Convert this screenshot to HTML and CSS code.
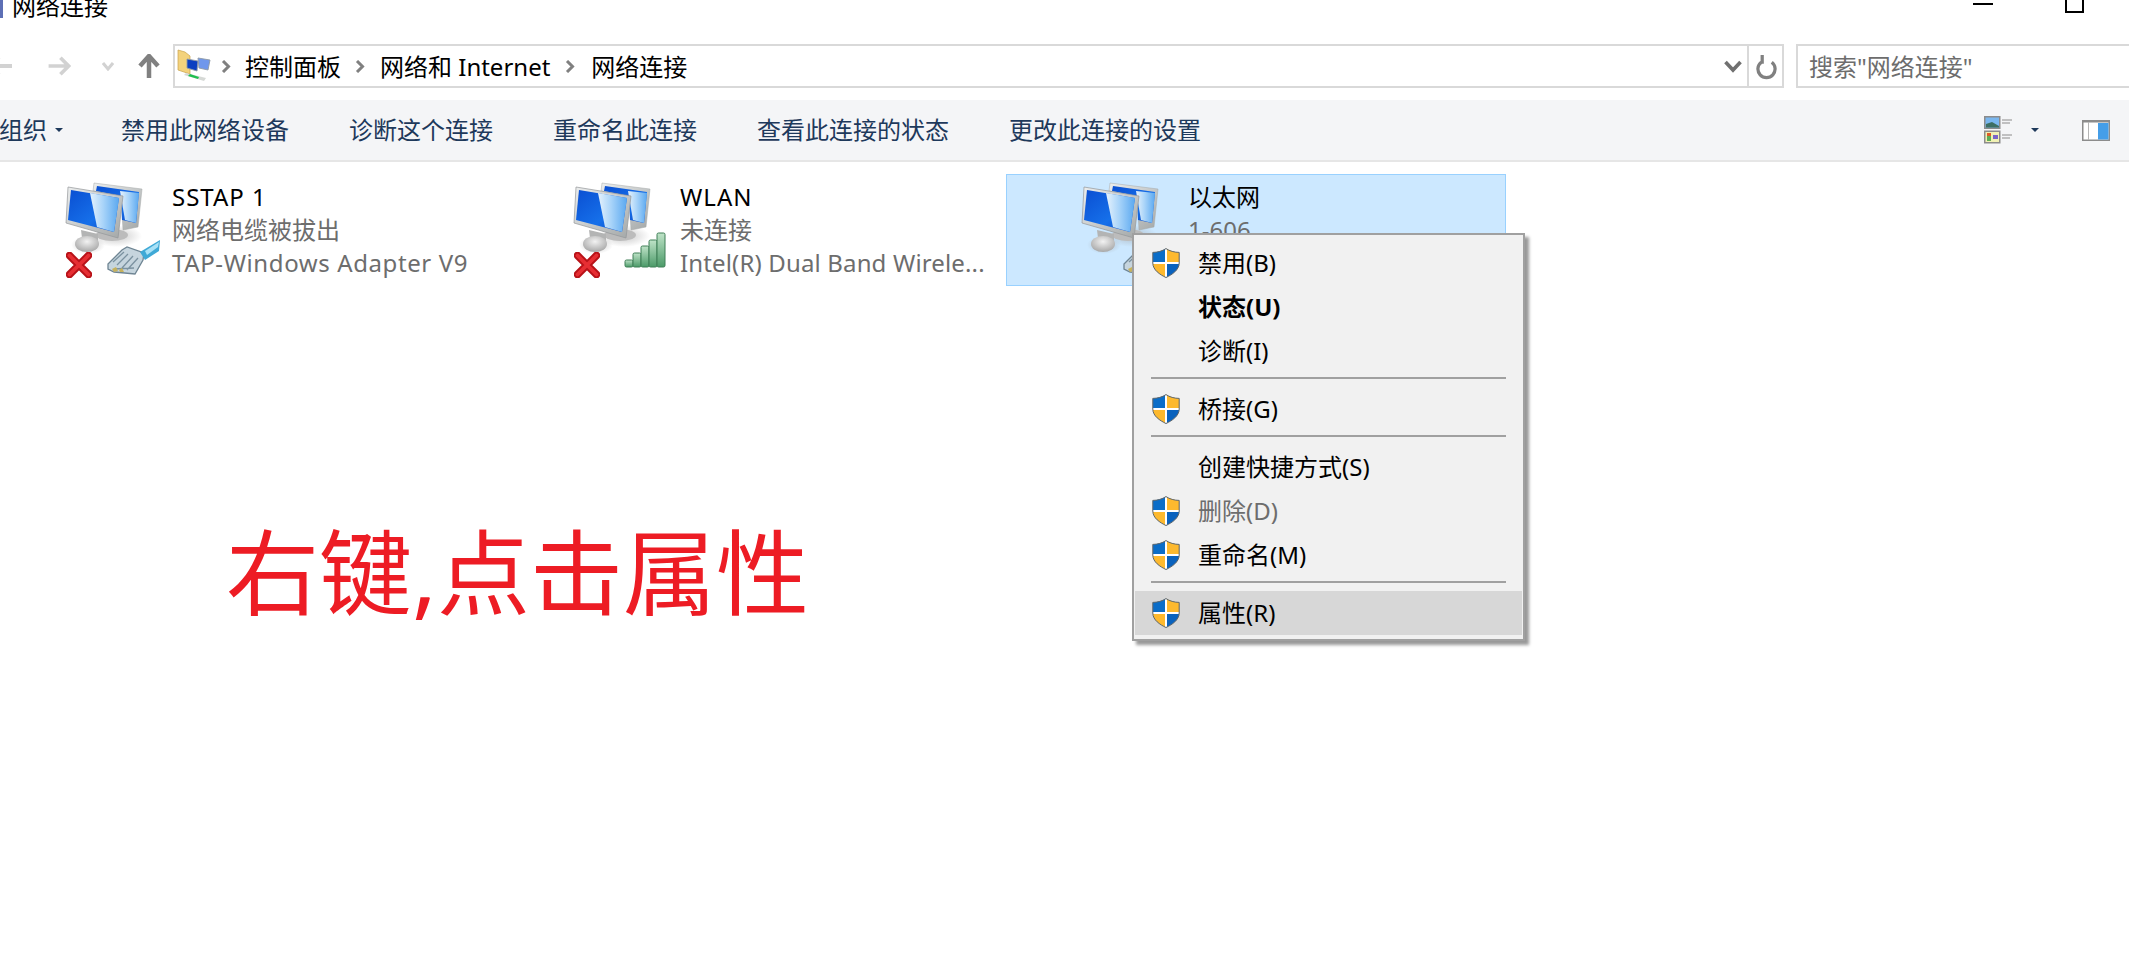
FILE: index.html
```html
<!DOCTYPE html>
<html lang="zh-CN">
<head>
<meta charset="utf-8">
<title>网络连接</title>
<link rel="stylesheet" href="styles.css">
</head>
<body>
<svg class="defs" width="0" height="0" aria-hidden="true">
  <defs>
    <linearGradient id="scr" x1="0" y1="0" x2="1" y2="1">
      <stop offset="0" stop-color="#0a4fd2"/><stop offset=".6" stop-color="#1670ea"/><stop offset="1" stop-color="#0a45c2"/>
    </linearGradient>
    <linearGradient id="glare" x1="0" y1="0" x2="1" y2="0">
      <stop offset="0" stop-color="#e6f2fc"/><stop offset=".45" stop-color="#a9d4f9"/><stop offset="1" stop-color="#5aa8f0"/>
    </linearGradient>
    <linearGradient id="frame" x1="0" y1="0" x2="1" y2="1">
      <stop offset="0" stop-color="#eceeee"/><stop offset="1" stop-color="#a3a7a7"/>
    </linearGradient>
    <radialGradient id="base" cx=".5" cy=".35" r=".7">
      <stop offset="0" stop-color="#f2f2f2"/><stop offset="1" stop-color="#a2a2a2"/>
    </radialGradient>
    <radialGradient id="soft" cx=".5" cy=".5" r=".5">
      <stop offset="0" stop-color="#9a9a9a" stop-opacity=".55"/><stop offset="1" stop-color="#9a9a9a" stop-opacity="0"/>
    </radialGradient>
    <linearGradient id="bar" x1="0" y1="0" x2="0" y2="1">
      <stop offset="0" stop-color="#bfe3c8"/><stop offset="1" stop-color="#4b9a68"/>
    </linearGradient>
    <symbol id="computers" viewBox="0 4 122 112">
      <ellipse cx="66" cy="66" rx="26" ry="11" fill="url(#soft)"/>
      <ellipse cx="62" cy="65" rx="16" ry="6" fill="#bcbcbc"/>
      <path d="M44 13 92 19 88 57 73 60 71 26 43 21Z" fill="url(#frame)" stroke="#a5a9a9" stroke-width=".5"/>
      <path d="M47 16 89 22 86 53 72 50 71 26 46 21Z" fill="url(#scr)"/>
      <path d="M70 21 89 23 86 53 75 50Z" fill="url(#glare)"/>
      <ellipse cx="38" cy="75" rx="17" ry="9" fill="url(#soft)"/>
      <path d="M18 17 73 26 68 68 16 53Z" fill="url(#frame)" stroke="#93979a" stroke-width=".7"/>
      <path d="M31 60 48 64 48 71 32 68Z" fill="#b3b4b4"/>
      <ellipse cx="37" cy="74" rx="12" ry="8" fill="url(#base)"/>
      <path d="M21 20 69 28 64 62 18 50Z" fill="url(#scr)"/>
      <path d="M40 23 69 28 64 62 47 57Z" fill="url(#glare)"/>
    </symbol>
    <symbol id="cross" viewBox="0 0 26 26">
      <path d="M3.500 3.500 22.500 22.500M22.500 3.500 3.500 22.500" stroke="#b81218" stroke-width="7.500" stroke-linecap="round"/>
      <path d="M3.500 3.500 22.500 22.500M22.500 3.500 3.500 22.500" stroke="#e62e33" stroke-width="3.800" stroke-linecap="round"/>
    </symbol>
    <symbol id="plug" viewBox="0 0 54 40">
      <path d="M1 26 15 12 20 9 37 15 36 22 28 36 7 34 1 31Z" fill="#c6d5de" stroke="#6f8593" stroke-width="1.300"/>
      <path d="M6 24 17 14M10 27 21 16M15 30 26 18M20 32 31 20M7 31 27 30" stroke="#7b92a0" stroke-width="1.300"/>
      <path d="M5 31 9 29 11 33 7 34ZM12 32 15 30 17 34 13 34Z" fill="#c6b25e"/>
      <path d="M33 14 53 2 52 13 38 22Z" fill="#3fa9d6"/>
      <path d="M38 13 52 4 51 9 40 17Z" fill="#a9e1f6"/>
    </symbol>
    <symbol id="shield" viewBox="0 0 28 30">
      <clipPath id="shieldclip"><path d="M14 .6C10.500 3 5.500 4.400 .8 4.400V15C.8 22 8 26.700 14 29.500 20 26.700 27.200 22 27.200 15V4.400C22.500 4.400 17.500 3 14 .6Z"/></clipPath>
      <g clip-path="url(#shieldclip)">
        <rect width="14" height="15" fill="#0a6dc8"/>
        <rect x="14" width="14" height="15" fill="#fdb92e"/>
        <rect y="15" width="14" height="15" fill="#fdb92e"/>
        <rect x="14" y="15" width="14" height="15" fill="#0a62bd"/>
        <rect x="13" width="2" height="30" fill="#fff"/>
        <rect y="14" width="28" height="2" fill="#fff"/>
      </g>
      <path d="M14 .6C10.500 3 5.500 4.400 .8 4.400V15C.8 22 8 26.700 14 29.500 20 26.700 27.200 22 27.200 15V4.400C22.500 4.400 17.500 3 14 .6Z" fill="none" stroke="#5e666b" stroke-width="1"/>
    </symbol>
  </defs>
</svg>

<header class="titlebar">
  <span class="title-icon"></span>
  <span class="title">网络连接</span>
  <span class="win-min"></span>
  <span class="win-max"></span>
</header>

<nav class="addressrow">
  <div class="navbtns">
    <svg class="nav back" viewBox="0 0 24 22"><path d="M11 2 2 11 11 20M2 11H24" fill="none" stroke="#d2d2d2" stroke-width="4"/></svg>
    <svg class="nav fwd" viewBox="0 0 24 22"><path d="M13 2 22 11 13 20M22 11H0" fill="none" stroke="#d2d2d2" stroke-width="4"/></svg>
    <svg class="nav down" viewBox="0 0 12 9"><path d="M1 1 6 7 11 1" fill="none" stroke="#d2d2d2" stroke-width="3"/></svg>
    <svg class="nav up" viewBox="0 0 22 24"><path d="M2 12 11 2 20 12M11 3V24" fill="none" stroke="#808080" stroke-width="4.500"/></svg>
  </div>
  <div class="addressbox">
    <svg class="crumb-icon" viewBox="0 0 34 34">
      <path d="M1 1 8 3 13 7V25L1 21Z" fill="#f3d27c" stroke="#c9a24a" stroke-width=".7"/>
      <path d="M10 10 21 12 20 22 10 19Z" fill="#0b3fc0" stroke="#8f9aa5" stroke-width=".9"/>
      <path d="M21 9 33 11 31 21 22 19Z" fill="#6f97ec" stroke="#8f9aa5" stroke-width=".9"/>
      <path d="M7 26 27 32 29 29 9 24Z" fill="#d6d9d6"/>
      <path d="M11 27 21 30 22 28 13 25Z" fill="#1fbf4f"/>
    </svg>
    <svg class="sep-chevron sep-first" viewBox="0 0 10 13"><path d="M2 1 7.500 6.500 2 12" fill="none" stroke="#808080" stroke-width="3"/></svg>
    <span class="crumb">控制面板</span>
    <svg class="sep-chevron sep-second" viewBox="0 0 10 13"><path d="M2 1 7.500 6.500 2 12" fill="none" stroke="#808080" stroke-width="3"/></svg>
    <span class="crumb">网络和 Internet</span>
    <svg class="sep-chevron sep-third" viewBox="0 0 10 13"><path d="M2 1 7.500 6.500 2 12" fill="none" stroke="#808080" stroke-width="3"/></svg>
    <span class="crumb">网络连接</span>
    <svg class="drop" viewBox="0 0 18 13"><path d="M1.500 2 9 10 16.500 2" fill="none" stroke="#707070" stroke-width="3.600"/></svg>
    <span class="refresh">
      <svg viewBox="0 0 22 30"><path d="M5.500 10.500A9 9 0 1 0 16.500 10.500M6.500 3V12" fill="none" stroke="#808080" stroke-width="3.400"/></svg>
    </span>
  </div>
  <div class="searchbox">搜索"网络连接"</div>
</nav>

<section class="toolbar">
  <span class="tool tool-org">组织<i class="caret"></i></span>
  <span class="tool">禁用此网络设备</span>
  <span class="tool">诊断这个连接</span>
  <span class="tool">重命名此连接</span>
  <span class="tool">查看此连接的状态</span>
  <span class="tool">更改此连接的设置</span>
  <svg class="view-icon" viewBox="0 0 28 28">
    <rect x=".75" y=".75" width="15" height="11.500" fill="#7ab7ef" stroke="#8c8c8c" stroke-width="1.500"/>
    <path d="M2 8 8 6 15 10V11.500H2Z" fill="#3d6f63"/>
    <path d="M18 4H28M18 7H26" stroke="#8c8c8c" stroke-width="1.200"/>
    <rect x=".75" y="15.250" width="15" height="11.500" fill="#f1f1b4" stroke="#8c8c8c" stroke-width="1.500"/>
    <path d="M3 17H7V25H3Z" fill="#5fae55"/><path d="M3 17H7V20H3Z" fill="#df5b25"/><rect x="9" y="19" width="5" height="4" fill="#7a66c9"/>
    <path d="M18 19H28M18 22H26" stroke="#8c8c8c" stroke-width="1.200"/>
  </svg>
  <i class="caret view-caret"></i>
  <svg class="pane-icon" viewBox="0 0 28 21">
    <rect x=".75" y=".75" width="26.500" height="19.500" fill="#fff" stroke="#8c8c8c" stroke-width="1.500"/>
    <rect y="0" width="28" height="2.500" fill="#8c8c8c"/>
    <path d="M6.500 2V20" stroke="#b5b5b5"/>
    <rect x="16" y="3" width="10.500" height="16.500" fill="#459ee8"/>
  </svg>
</section>

<main class="items">
  <article class="item">
    <svg class="item-icon" viewBox="0 4 122 112">
      <use href="#computers" x="0" y="4" width="122" height="112"/>
      <use href="#cross" x="16" y="82" width="26" height="26"/>
      <use href="#plug" x="57" y="68" width="54" height="40"/>
    </svg>
    <div class="item-text">
      <div class="item-name latin-name">SSTAP 1</div>
      <div class="item-sub">网络电缆被拔出</div>
      <div class="item-sub latin-wide">TAP-Windows Adapter V9</div>
    </div>
  </article>
  <article class="item">
    <svg class="item-icon" viewBox="0 4 122 112">
      <use href="#computers" x="0" y="4" width="122" height="112"/>
      <use href="#cross" x="16" y="82" width="26" height="26"/>
      <g fill="url(#bar)" stroke="#3f7f57" stroke-width="1">
        <rect x="67" y="90" width="8" height="7" rx="1.500"/>
        <rect x="75" y="83" width="8" height="14" rx="1.500"/>
        <rect x="83" y="76" width="8" height="21" rx="1.500"/>
        <rect x="91" y="70" width="8" height="27" rx="1.500"/>
        <rect x="99" y="63" width="8" height="34" rx="1.500"/>
      </g>
    </svg>
    <div class="item-text">
      <div class="item-name latin-name">WLAN</div>
      <div class="item-sub">未连接</div>
      <div class="item-sub latin-slight">Intel(R) Dual Band Wirele...</div>
    </div>
  </article>
  <article class="item item-selected">
    <svg class="item-icon" viewBox="0 4 122 112">
      <use href="#computers" x="0" y="4" width="122" height="112"/>
      <use href="#plug" x="57" y="68" width="54" height="40"/>
    </svg>
    <div class="item-text">
      <div class="item-name">以太网</div>
      <div class="item-sub">1-606</div>
    </div>
  </article>
</main>

<div class="annotation">右键,点击属性</div>

<ul class="menu">
  <li class="row"><svg class="shield"><use href="#shield"/></svg>禁用(B)</li>
  <li class="row row-bold">状态(U)</li>
  <li class="row">诊断(I)</li>
  <li class="sep"></li>
  <li class="row"><svg class="shield"><use href="#shield"/></svg>桥接(G)</li>
  <li class="sep"></li>
  <li class="row">创建快捷方式(S)</li>
  <li class="row row-off"><svg class="shield"><use href="#shield"/></svg>删除(D)</li>
  <li class="row"><svg class="shield"><use href="#shield"/></svg>重命名(M)</li>
  <li class="sep"></li>
  <li class="row row-hover"><svg class="shield"><use href="#shield"/></svg>属性(R)</li>
</ul>
</body>
</html>
```

FILE: styles.css
```css
* { box-sizing: border-box; }
html, body { margin: 0; padding: 0; height: 968px; overflow: hidden; background: #fff; }
body {
  position: relative;
  font-family: "Noto Sans", "Noto Sans CJK SC", sans-serif;
  font-size: 24px;
  color: #000;
}
.defs { position: absolute; }

/* title bar */
.titlebar { height: 44px; display: flex; align-items: flex-start; overflow: hidden; }
.title-icon { width: 3px; height: 18px; background: #5d6fb5; flex: none; }
.title { margin: -12px 0 0 9px; line-height: 36px; }
.win-min { width: 20px; height: 2px; background: #000; margin: 3px 0 0 auto; }
.win-max { width: 19px; height: 13px; border: 2px solid #000; border-top: 0; margin: 0 45px 0 72px; }

/* address row */
.addressrow { height: 44px; display: flex; }
.navbtns { width: 173px; flex: none; display: flex; align-items: center; }
.nav { flex: none; display: block; }
.back { width: 24px; height: 22px; margin-left: -12px; }
.fwd { width: 23px; height: 20px; margin-left: 36px; }
.down { width: 12px; height: 9px; margin-left: 31px; }
.up { width: 22px; height: 24px; margin-left: 24px; }
.addressbox {
  width: 1611px; flex: none;
  border: 2px solid #d9d9d9;
  display: flex; align-items: center;
  padding-left: 2px;
}
.crumb-icon { width: 34px; height: 34px; flex: none; }
.sep-chevron { width: 10px; height: 13px; flex: none; margin: 0 14px; }
.sep-chevron.sep-first { margin: 0 14px 0 10px; }
.sep-chevron.sep-second { margin: 0 15px 0 14px; }
.sep-chevron.sep-third { margin: 0 16px 0 15px; }
.crumb { color: #000; white-space: nowrap; line-height: 40px; padding-top: 1px; }
.drop { width: 18px; height: 13px; margin-left: auto; flex: none; }
.refresh {
  width: 35px; height: 40px; flex: none;
  margin-left: 5px; padding-left: 2px;
  border-left: 2px solid #d9d9d9;
  display: flex; align-items: center; justify-content: center;
}
.refresh svg { width: 21px; height: 29px; }
.searchbox {
  flex: 1; min-width: 0; margin-left: 12px;
  border: 2px solid #d9d9d9; border-right: 0;
  color: #6d6d6d; line-height: 41px; padding-left: 11px; white-space: nowrap;
}

/* command bar */
.toolbar {
  margin-top: 12px; height: 62px;
  background: #f4f5f7; border-bottom: 2px solid #e6e6e6;
  display: flex; align-items: center; gap: 60px;
  color: #1e395b;
}
.tool { white-space: nowrap; line-height: 40px; }
.tool-org { margin-left: -1px; display: flex; align-items: center; width: 62px; }
.caret {
  display: block; width: 0; height: 0;
  border-left: 4px solid transparent; border-right: 4px solid transparent; border-top: 4px solid #1e395b;
}
.tool-org .caret { margin-left: 8px; }
.view-icon { width: 28px; height: 28px; margin-left: auto; flex: none; }
.view-caret { margin-left: -41px; }
.pane-icon { width: 28px; height: 21px; margin: 0 19px 0 -17px; flex: none; }

/* file items */
.items { display: grid; grid-template-columns: repeat(3, 500px); gap: 8px; margin: 12px 0 0 -10px; }
.item { height: 112px; display: flex; padding-left: 60px; }
.item-icon { width: 122px; height: 112px; flex: none; display: block; }
.item-text { padding-top: 6px; line-height: 33px; white-space: nowrap; }
.item-sub { color: #6d6d6d; }
.latin-name { letter-spacing: 1px; }
.latin-wide { letter-spacing: .6px; }
.latin-slight { letter-spacing: .15px; }
.item-selected { background: #cce8ff; box-shadow: inset 0 0 0 1px #99d1ff; }

/* annotation over the empty canvas */
.annotation {
  position: absolute; left: 226px; top: 508px;
  font-size: 93px; line-height: 128px; color: #ed1c24; white-space: nowrap;
}

/* context menu */
.menu {
  position: absolute; left: 1132px; top: 233px; width: 393px;
  margin: 0; padding: 6px 1px 4px; list-style: none;
  background: #f1f1f1; border: 2px solid #a0a0a0;
  box-shadow: 4px 4px 3px rgba(0,0,0,.4);
  color: #000;
}
.row { height: 44px; display: flex; align-items: center; padding-left: 63px; position: relative; line-height: 44px; }
.row-bold { font-weight: 700; }
.row-off { color: #6d6d6d; }
.row-hover { background: #d7d7d7; }
.shield { width: 28px; height: 30px; position: absolute; left: 17px; top: 7px; }
.sep { height: 14px; padding-top: 4px; margin: 0 16px; }
.sep::before { content: ""; display: block; height: 2px; background: #a0a0a0; }
```
